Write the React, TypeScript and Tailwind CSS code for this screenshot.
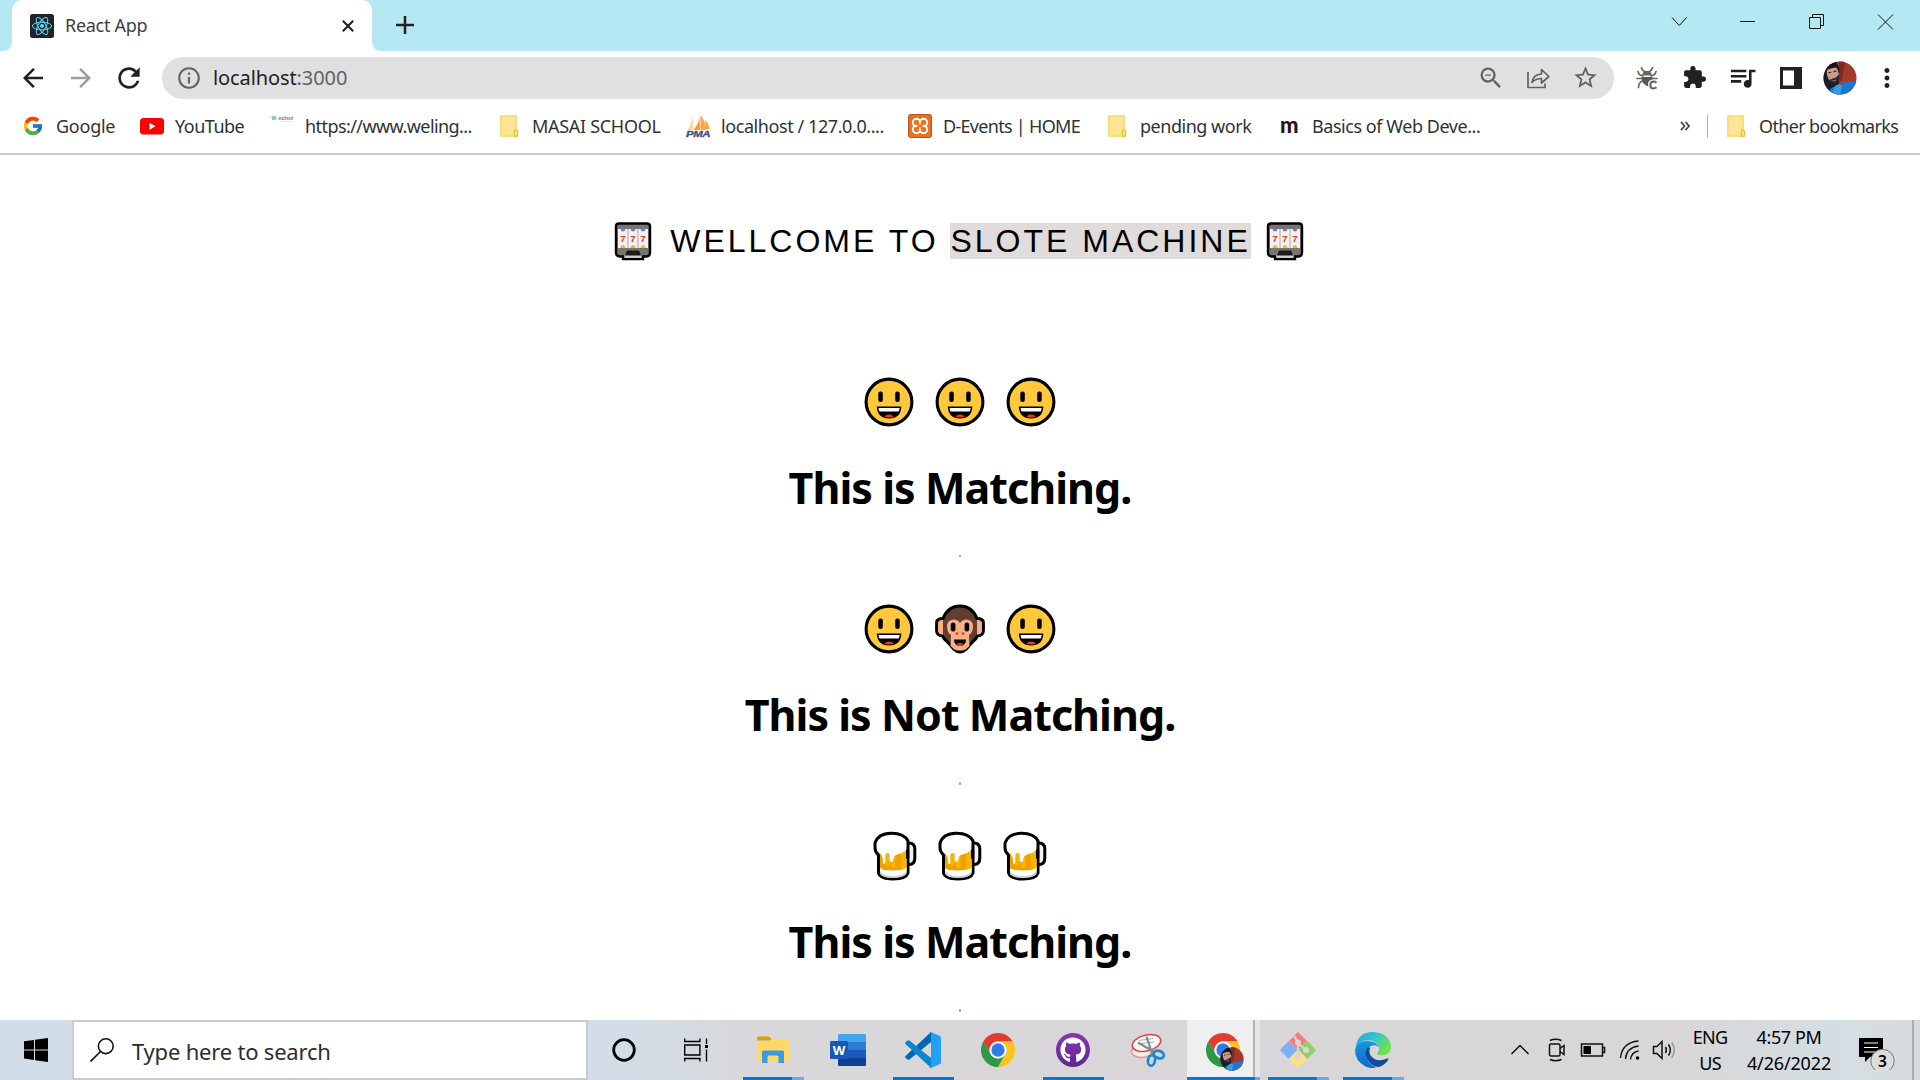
import React from 'react';
import { FcGoogle } from 'react-icons/fc';
import { FaGithub } from 'react-icons/fa';
import {
  MdArrowBack,
  MdArrowForward,
  MdExtension,
  MdInfoOutline,
  MdMoreVert,
  MdQueueMusic,
  MdRefresh,
  MdStarBorder,
  MdZoomOut,
} from 'react-icons/md';

/* ---------- browser chrome icons ---------- */

const ReactLogo = () => (
  <svg viewBox="0 0 24 24" className="size-6 shrink-0">
    <rect width="24" height="24" rx="2.5" fill="#20232a" />
    <g fill="none" stroke="#61dafb" strokeWidth="1">
      <ellipse cx="12" cy="12" rx="9.6" ry="3.8" />
      <ellipse cx="12" cy="12" rx="9.6" ry="3.8" transform="rotate(60 12 12)" />
      <ellipse cx="12" cy="12" rx="9.6" ry="3.8" transform="rotate(120 12 12)" />
    </g>
    <circle cx="12" cy="12" r="2" fill="#61dafb" />
  </svg>
);

const Folder = () => (
  <svg viewBox="0 0 24 24" className="size-6">
    <path d="M3.8 1.800h15.400v20.400H3.800z" fill="#ffe595" stroke="#f7d75e" strokeWidth="1.300" />
    <path d="M17.300 22.200v-4.800q0-1 1-1h1.300q1 0 1 1v4.800z" fill="#ffe595" stroke="#eabf2c" strokeWidth="1.200" />
  </svg>
);

const YouTube = () => (
  <svg viewBox="0 0 24 24" className="size-6">
    <rect y="4" width="24" height="16.5" rx="3.5" fill="#f00" />
    <path d="M9.5 8.7v7l6-3.5z" fill="#fff" />
  </svg>
);

const Welingkar = () => (
  <svg viewBox="0 0 24 24" className="size-6">
    <g fontFamily="Liberation Sans, sans-serif" fontWeight="700" fontSize="5">
      <text x="1.500" y="6" textLength="9" fill="#5fa85c">We</text>
      <text x="10.500" y="6" textLength="12" fill="#8d7fa5">school</text>
    </g>
    <path d="M10 7.500h12" stroke="#dcdce2" strokeWidth=".8" />
  </svg>
);

const PhpMyAdmin = () => (
  <svg viewBox="0 0 24 24" className="size-6">
    <path d="M6.500 2Q6 9 1.500 16h6z" fill="#fbd7a5" />
    <path d="M13.500.5Q14 8 7.500 16H14z" fill="#f89c2c" />
    <path d="M14.500 1q5 6 5.500 15h-5.500z" fill="#f9a842" />
    <path d="M19 6q4 4 4.500 9H20z" fill="#f5a549" />
    <text x="0" y="23.300" textLength="24" lengthAdjust="spacingAndGlyphs" fontFamily="Liberation Sans, sans-serif" fontWeight="700" fontStyle="italic" fontSize="9.800" fill="#4b4b78" stroke="#4b4b78" strokeWidth=".3">PMA</text>
  </svg>
);

const Xampp = () => (
  <svg viewBox="0 0 24 24" className="size-6">
    <rect x=".5" y=".5" width="23" height="23" rx="2" fill="#e8701e" stroke="#b9561a" />
    <g fill="none" stroke="#fff" strokeWidth="7.500">
      <circle cx="8.500" cy="8.500" r="1" />
      <circle cx="15.500" cy="8.500" r="1" />
      <circle cx="8.500" cy="15.500" r="1" />
      <circle cx="15.500" cy="15.500" r="1" />
    </g>
    <path d="M8 8q2.500-.5 2.500 2.200V12h3v-1.800Q13.500 7.500 16 8M8 16q2.500.5 2.500-2.200V12M16 16q-2.500.5-2.500-2.200V12" fill="none" stroke="#ea7524" strokeWidth="2.200" strokeLinecap="round" />
  </svg>
);

const MLogo = () => (
  <span className="flex size-6 items-center justify-center pb-0.5 font-['Lato',sans-serif] text-[22px] leading-none font-black text-[#2b1512]">m</span>
);

const Share = () => (
  <svg viewBox="0 0 24 24" className="size-6" fill="none" stroke="#5f6368" strokeWidth="1.700" strokeLinejoin="round">
    <path d="M2 6v15.500h17V17.500" />
    <path d="M6 16.500q1-8 9.500-8.500V3.500l7.300 7-7.300 6.500v-4.500q-6 0-9.500 4z" />
  </svg>
);

const Bug = () => (
  <svg viewBox="0 0 24 24" className="size-6">
    <g fill="none" stroke="#6e665e" strokeWidth="1.700" strokeLinecap="round">
      <path d="M6.500 1.500q1 3.500 3.500 4M17.500 1.500q-1 3.500-3.500 4M3 5.500q1 4 5 4.500M21 5.500q-1 4-5 4.500M2 12.500h5M17 12.500h5M3.500 21.500q0-5 4-6.500" />
    </g>
    <path d="M8 6.500q4-3.500 8 0l1.200 3H6.800z" fill="#6e665e" />
    <path d="M6.500 11h11v2.500q-4.500.500-4.500 4.500 0 1.500.5 2.500Q6.500 19 6.500 11z" fill="#5e564e" />
    <path d="M21.500 16.700q-1.200-1.200-3-1.200-3.200 0-3.200 3.500t3.200 3.500q1.800 0 3-1.200" fill="none" stroke="#6e665e" strokeWidth="2" />
  </svg>
);

const SidePanel = () => (
  <svg viewBox="0 0 22 22" className="size-[22px]">
    <path d="M0 0h22v22H0z" fill="#202124" />
    <path d="M3 3.500h11v15H3z" fill="#fff" />
  </svg>
);

const Avatar = ({ id, className }: { id: string; className: string }) => (
  <svg viewBox="0 0 34 34" className={className}>
    <clipPath id={id}>
      <circle cx="17" cy="17" r="16.500" />
    </clipPath>
    <g clipPath={'url(#' + id + ')'}>
      <rect width="34" height="34" fill="#a33a2c" />
      <path d="M0 0h13l3 8v26H0z" fill="#1a1c2c" />
      <path d="M16 0h6l-3 20h-4z" fill="#7c2a24" />
      <path d="M5 34q0-8 9-9l6-3q6-3 14-1v13z" fill="#1b78cb" />
      <path d="M16 23l3 2-2 9H9l3-9z" fill="#3b9be6" />
      <ellipse cx="10" cy="13" rx="6" ry="9" fill="#c99b8b" transform="rotate(-12 10 13)" />
      <path d="M3.500 9Q3 1.500 9 1.200q6-.2 7.500 7l-.5 5q-1-5.500-2.500-7-5 .5-10 2.800z" fill="#15131a" />
      <path d="M6.500 18.500q1.500 0 4-1.200 3-.3 5.500-4.300.5 8.500-3 9.800-5 .7-6.500-4.300z" fill="#33232a" />
      <path d="M9.500 19.700q2 .4 3.600-.9" stroke="#b87b70" fill="none" />
      <path d="M5.500 11.800l2.600-.5M10.500 10.700l3-.7" stroke="#231a20" strokeWidth="1.100" />
    </g>
  </svg>
);

const Bookmark = ({ icon, label, className }: { icon: React.ReactNode; label: string; className: string }) => (
  <div className={'flex shrink-0 items-center gap-[11px] whitespace-nowrap ' + className}>
    <span className="flex size-6 shrink-0 items-center justify-center">{icon}</span>
    <span>{label}</span>
  </div>
);

function TabStrip() {
  return (
    <div className="flex h-[51px] items-start bg-[#b4e8f2]">
      <div className="relative ml-3 flex h-[51px] w-[360px] items-center rounded-t-[10px] bg-white pl-[18px]">
        <svg viewBox="0 0 12 12" className="absolute bottom-0 -left-[10px] size-[10px]">
          <path d="M12 0v12H0Q12 12 12 0z" fill="#fff" />
        </svg>
        <svg viewBox="0 0 12 12" className="absolute -right-[10px] bottom-0 size-[10px]">
          <path d="M0 0v12h12Q0 12 0 0z" fill="#fff" />
        </svg>
        <ReactLogo />
        <span className="ml-[11px] w-[277px] text-[18px] tracking-[-0.3px] text-[#3c4043]">React App</span>
        <svg viewBox="0 0 12 12" className="size-3 shrink-0">
          <path d="M.8.8l10.400 10.400M11.200.8L.8 11.200" stroke="#202124" strokeWidth="2.100" />
        </svg>
      </div>
      <svg viewBox="0 0 18 18" className="mt-[16px] ml-6 size-[18px]">
        <path d="M9 0v18M0 9h18" stroke="#202124" strokeWidth="2.500" />
      </svg>
      <svg viewBox="0 0 280 51" className="ml-auto h-[51px] w-[280px]" fill="none" stroke="#111" strokeWidth="1">
        <path d="M32 17.500l7.300 8 7.300-8" />
        <path d="M100 21.500h15" />
        <path d="M169.500 17.500h11v11h-11zM172.500 17.500v-3h11v11h-3" />
        <path d="M238 14.500l15 15M253 14.500l-15 15" />
      </svg>
    </div>
  );
}

function Toolbar() {
  return (
    <div className="flex h-[53px] items-center text-[#202124]">
      <MdArrowBack className="ml-[18px] size-[30px]" />
      <MdArrowForward className="ml-[18px] size-[30px] text-[#9b9da0]" />
      <MdRefresh className="ml-[17px] size-8" />
      <div className="ml-[17px] flex h-[42px] w-[1452px] shrink-0 items-center rounded-full bg-[#e0e0e0] pl-[14px] text-[#5f6368]">
        <MdInfoOutline className="size-[26px] shrink-0" />
        <span className="mt-px ml-[11px] w-[1264px] shrink-0 text-[20px] tracking-[-0.1px]">
          <span className="text-[#202124]">localhost</span>:3000
        </span>
        <MdZoomOut className="size-7 shrink-0" />
        <span className="ml-[21px]"><Share /></span>
        <MdStarBorder className="ml-[22px] size-[27px] shrink-0" />
      </div>
      <span className="ml-[21px]"><Bug /></span>
      <MdExtension className="ml-[23px] size-[25px]" />
      <MdQueueMusic className="ml-5 size-[31px]" />
      <span className="ml-[22px]"><SidePanel /></span>
      <Avatar id="avatar-toolbar" className="ml-[21px] size-[34px]" />
      <MdMoreVert className="ml-[15px] size-[30px]" />
    </div>
  );
}

function BookmarksBar() {
  return (
    <div className="flex h-[51px] items-center border-b-2 border-[#cacaca] pb-[5px] pl-[21px] text-[18px] text-[#2f3235]">
      <Bookmark icon={<FcGoogle className="size-[22px]" />} label="Google" className="w-[119px] tracking-[-0.25px]" />
      <Bookmark icon={<YouTube />} label="YouTube" className="w-[130px] tracking-[-0.5px]" />
      <Bookmark icon={<Welingkar />} label="https://www.weling..." className="w-[227px] tracking-[-0.57px]" />
      <Bookmark icon={<Folder />} label="MASAI SCHOOL" className="w-[189px] tracking-[-0.3px]" />
      <Bookmark icon={<PhpMyAdmin />} label="localhost / 127.0.0...." className="w-[222px] tracking-[-0.42px]" />
      <Bookmark icon={<Xampp />} label="D-Events | HOME" className="w-[197px] tracking-[-0.7px]" />
      <Bookmark icon={<Folder />} label="pending work" className="w-[172px] tracking-[-0.48px]" />
      <Bookmark icon={<MLogo />} label="Basics of Web Deve..." className="w-[403px] tracking-[-0.45px]" />
      <svg viewBox="0 0 10 10" className="size-[10px]" fill="none" stroke="#4a4d51" strokeWidth="1.800">
        <path d="M1 .8L4.500 5 1 9.200M5.500.8L9 5 5.500 9.200" />
      </svg>
      <div className="ml-[17px] h-6 w-px bg-[#b5b5b5]" />
      <Bookmark icon={<Folder />} label="Other bookmarks" className="ml-4 tracking-[-0.65px]" />
    </div>
  );
}

/* ---------- page emoji ---------- */

const Slot = () => (
  <svg viewBox="0 0 44 44" className="size-11">
    <path d="M8 5.500h28q3 0 3 3v26q0 4-4 4h-3V41H12v-2.500H9q-4 0-4-4v-26q0-3 3-3z" fill="#767676" stroke="#000" strokeWidth="2.400" />
    <path d="M13.500 37h17v3h-17z" fill="#ccc" />
    <path d="M16 32.500h12l2 5H14z" fill="#1c1c1c" />
    <rect x="7" y="11" width="30" height="19" fill="#f2f2f2" />
    <path d="M17 11v19M27 11v19" stroke="#aaa" strokeWidth="1" />
    <path d="M9.500 11h5q-.5 2.500-2.500 2.500T9.500 11zM19.500 11h5q-.5 2.500-2.500 2.500t-2.500-2.500zM29.500 11h5q-.5 2.500-2.500 2.500t-2.500-2.500z" fill="#886ce4" />
    <path d="M9.500 30h5q-.5-3-2.500-3t-2.500 3zM19.500 30h5q-.5-3-2.500-3t-2.500 3zM29.500 30h5q-.5-3-2.500-3t-2.500 3z" fill="#ffb900" />
    <g fontFamily="Liberation Sans, sans-serif" fontWeight="700" fontSize="9.500" fill="#e8321c" textAnchor="middle">
      <text x="12" y="23.500">7</text>
      <text x="22" y="23.500">7</text>
      <text x="32" y="23.500">7</text>
    </g>
  </svg>
);

const Smile = () => (
  <svg viewBox="0 0 50 50" className="size-[50px]">
    <circle cx="25" cy="25" r="22.900" fill="#ffc83d" stroke="#000" strokeWidth="3.100" />
    <rect x="14.300" y="14.500" width="4.500" height="10.500" rx="2" />
    <rect x="31.200" y="14.500" width="4.500" height="10.500" rx="2" />
    <path d="M12.800 29.500h24.600q-.6 12-12.300 12t-12.300-12z" />
    <path d="M14.600 30.900h21q-.2 3.700-1.700 3.700H16.300q-1.500 0-1.700-3.700z" fill="#fff" />
    <path d="M20.500 39.500q1.500-1.900 4.600-1.900t4.600 1.900q-1.800 1.100-4.600 1.100t-4.600-1.100z" fill="#f03a17" />
  </svg>
);

const Monkey = () => (
  <svg viewBox="0 0 50 50" className="size-[50px]">
    <path d="M25 2q12 0 17 12.500 6.400 0 6.400 4v8q0 5-6 5.500-1 3-5 6l-6.500 7.500q-2.500 2.500-5.900 2.500t-5.900-2.500L12.600 38q-4-3-5-6-6-.5-6-5.500v-8q0-4 6.400-4Q13 2 25 2z" fill="#603e30" stroke="#000" strokeWidth="3" strokeLinejoin="round" />
    <path d="M8 16v14.500q-5 0-5-4v-7q0-3.500 5-3.500zM42 16v14.500q5 0 5-4v-7q0-3.500-5-3.500z" fill="#f7af87" />
    <path d="M25 19q2-3.500 6.500-3.500 6.500.5 6.500 7 0 6-4 8.500l.5 11-4 3.500q-2 1-5.500 1T19.500 45.500l-4-3.500.5-11q-4-2.500-4-8.500 0-6.500 6.500-7Q23 15.500 25 19z" fill="#f7af87" />
    <rect x="15.800" y="18.500" width="4.600" height="9" rx="2.200" />
    <rect x="29.600" y="18.500" width="4.600" height="9" rx="2.200" />
    <circle cx="22" cy="29.500" r="1.500" fill="#d6521c" />
    <circle cx="28" cy="29.500" r="1.500" fill="#d6521c" />
    <path d="M19 35.500h12q0 6.500-6 6.500t-6-6.500z" />
    <path d="M21.500 40.300q3.500-2.500 7 0Q27 42 25 42t-3.500-1.700z" fill="#f03a17" />
  </svg>
);

const Beer = () => (
  <svg viewBox="0 0 44 50" className="h-[50px] w-11">
    <path d="M33.500 12h2.500q5.800 0 5.800 6v9q0 6.500-5.800 6.500h-2.500" fill="#f2f2f2" stroke="#000" strokeWidth="3" />
    <path d="M5.500 24Q2 21 2 17v-5Q5 2.500 18 2.200 31 2 35 10v32q-2 6-15 6T5.500 42z" fill="#fff" stroke="#000" strokeWidth="3" strokeLinejoin="round" />
    <path d="M7 37v6q3 4 13 4t13.500-4v-6z" fill="#d2d2d2" />
    <path d="M7 37v3q3 5 13 5t13.500-5v-4z" fill="#fff" />
    <path d="M7 22q3 3 3 9 0 2 1.200 2t1.300-2v-7q.5-2 2-2t2 2v5q.5 2 2 2 2 0 2-3 .5-4 5-5 5-1 8-4v17q-3 3.500-13.500 3.500T7 37z" fill="#eda200" />
    <path d="M12.500 24q.5-2 2-2t2 2v9q-.5 2-2 2t-2-2zM18 31.500q2.300 0 2.500-3 .5-3 2-4V35q-.5 2-2.200 2T18 35zM28 22.500q3.500-1 5.500-3.500V37l-5.500 2z" fill="#ffb900" opacity=".8" />
    <rect x="33" y="18" width="3.200" height="10" rx="1.500" />
  </svg>
);

function SlotResult({ reels, text, mark, gap }: { reels: React.ReactNode[]; text: string; mark: string; gap: string }) {
  return (
    <section className="flex h-[227px] flex-col items-center">
      <div className={'flex ' + gap}>
        {reels.map((reel, i) => (
          <React.Fragment key={i}>{reel}</React.Fragment>
        ))}
      </div>
      <h1 className="mt-[31px] text-[43px] leading-[60px] font-bold tracking-[-0.96px] whitespace-nowrap text-black">{text}</h1>
      <div className={mark} />
    </section>
  );
}

function Page() {
  return (
    <main className="flex h-[865px] flex-col items-center overflow-hidden bg-white pt-[62px]">
      <div className="flex h-12 items-center text-black">
        <span className="mr-[15px] pb-[2px] pl-px"><Slot /></span>
        <p className="font-['Liberation_Sans',Arial,sans-serif] text-[32px] leading-[48px] tracking-[3px] whitespace-nowrap">
          WELLCOME TO <span className="bg-[#e0dcdc]">SLOTE MACHINE</span>
        </p>
        <span className="mr-[3px] ml-3 pb-[2px]"><Slot /></span>
      </div>
      <div className="mt-[111.500px]">
        <SlotResult reels={[<Smile />, <Smile />, <Smile />]} text="This is Matching." mark="mt-[37px] size-[2px] bg-[#aaa]" gap="gap-[21.3px]" />
        <SlotResult reels={[<Smile />, <Monkey />, <Smile />]} text="This is Not Matching." mark="mt-[37px] h-[3px] w-[2px] bg-[#aaa]" gap="gap-[21.3px]" />
        <SlotResult reels={[<Beer />, <Beer />, <Beer />]} text="This is Matching." mark="mt-[37px] h-[3px] w-[2px] bg-[#aaa]" gap="gap-[21.3px]" />
      </div>
    </main>
  );
}

/* ---------- taskbar ---------- */

const ChromeLogo = ({ className }: { className: string }) => (
  <svg viewBox="2 2 44 44" className={className}>
    <path d="M24 13H43.050A22 22 0 0 0 4.950 13L14.470 29.500A11 11 0 0 1 24 13z" fill="#e33b2e" />
    <path d="M33.530 29.500L24 46A22 22 0 0 0 43.050 13H24A11 11 0 0 1 33.530 29.500z" fill="#fcc31e" />
    <path d="M14.470 29.500L4.950 13A22 22 0 0 0 24 46L33.530 29.500A11 11 0 0 1 14.470 29.500z" fill="#2a9a48" />
    <circle cx="24" cy="24" r="11" fill="#fff" />
    <circle cx="24" cy="24" r="8.600" fill="#2f7bea" />
  </svg>
);

const Explorer = () => (
  <svg viewBox="0 0 32 28" className="h-7 w-8">
    <path d="M0 2q0-1.500 1.500-1.500h10q1 0 2 1.500l1.500 2.500H0z" fill="#e0a000" />
    <path d="M0 5h12l3-2h15.500Q32 3 32 4.500v20q0 1.500-1.500 1.500h-29Q0 26 0 24.500z" fill="#ffd867" />
    <path d="M5 27V16q0-1.500 1.500-1.500h19Q27 14.500 27 16v11h-5.500v-6q0-1.500-1.500-1.500h-8q-1.500 0-1.500 1.500v6z" fill="#3a9be0" />
  </svg>
);

const Word = () => (
  <svg viewBox="0 0 36 33" className="h-[33px] w-9">
    <path d="M8 1.500Q8 0 9.500 0h25Q36 0 36 1.500V8H8z" fill="#41a5ee" />
    <path d="M8 8h28v8H8z" fill="#2b7cd3" />
    <path d="M8 16h28v8H8z" fill="#185abd" />
    <path d="M8 24h28v6.500q0 1.500-1.500 1.500h-25Q8 32 8 30.500z" fill="#103f91" />
    <rect y="7" width="18" height="18" rx="1.500" fill="#1857b8" />
    <text x="9" y="20.500" textAnchor="middle" fontFamily="Open Sans, sans-serif" fontSize="13" fontWeight="700" fill="#fff">W</text>
  </svg>
);

const VsCode = () => (
  <svg viewBox="0 0 36 36" className="size-9">
    <path d="M26 0v10L4.500 27.500q-1 .7-2 0L.5 25.800q-.8-.9 0-1.800z" fill="#0069ad" />
    <path d="M26 36V26L4.500 8.500q-1-.7-2 0L.5 10.200q-.8.900 0 1.800z" fill="#0b84d4" />
    <path d="M26 0l9 4q1 .5 1 1.600v24.800q0 1.100-1 1.600l-9 4q-1 .3-1.800-.3 1.800 0 1.800-1.700V2Q26 .3 24.200.3 25-.2 26 0z" fill="#22a0f1" />
  </svg>
);

const GitHub = () => (
  <span className="flex size-[34px] items-center justify-center rounded-full bg-[linear-gradient(180deg,#8a35b8,#5c2a88)]">
    <FaGithub className="size-[26px] text-white" />
  </span>
);

const Snip = () => (
  <svg viewBox="0 0 36 36" className="size-9">
    <ellipse cx="11.500" cy="19.500" rx="10" ry="6" fill="#eee" stroke="#e89a9a" strokeWidth="1.500" />
    <ellipse cx="16.500" cy="11" rx="14.500" ry="8" fill="#fafafa" stroke="#e04545" strokeWidth="1.600" transform="rotate(-14 16.500 11)" />
    <path d="M9 8.500l14-2M8 12l16-2" stroke="#aaa" strokeWidth="1" />
    <path d="M16.500 4.500l5.500 17M8 10.500l17 10" stroke="#858b90" strokeWidth="2.200" />
    <ellipse cx="28.800" cy="22.500" rx="5.200" ry="3.600" fill="none" stroke="#1e88cc" strokeWidth="2.700" transform="rotate(20 28.800 22.500)" />
    <ellipse cx="21.500" cy="28.500" rx="3.500" ry="5.300" fill="none" stroke="#1e88cc" strokeWidth="2.700" transform="rotate(10 21.500 28.500)" />
  </svg>
);

const GitLogo = () => (
  <svg viewBox="0 0 36 36" className="size-9">
    <path d="M18 .5L26.500 9 18 17.500 9.500 9z" fill="#f47c7c" stroke="#f47c7c" strokeLinejoin="round" />
    <path d="M27.500 9.500l8 8.500-8 8.500L19 18z" fill="#8fd06a" stroke="#8fd06a" strokeLinejoin="round" />
    <path d="M8.500 9.500L17 18l-8.500 8.500L.5 18z" fill="#7fb0fb" stroke="#7fb0fb" strokeLinejoin="round" />
    <path d="M18 18.500l8.500 8.500-8.500 8.500L9.500 27z" fill="#fbe27a" stroke="#fbe27a" strokeLinejoin="round" />
    <path d="M14 4l4 6v15M18 11l8 7" stroke="#d8d6d7" strokeWidth="2.200" fill="none" />
    <g fill="#d8d6d7">
      <circle cx="18" cy="10.500" r="3" />
      <circle cx="18" cy="25" r="3" />
      <circle cx="26" cy="18" r="3" />
    </g>
  </svg>
);

const Edge = () => (
  <svg viewBox="0 0 36 36" className="size-9">
    <defs>
      <linearGradient id="edge-top" x1="0" y1="0" x2="1" y2=".5">
        <stop offset="0" stopColor="#1fa5e0" />
        <stop offset=".5" stopColor="#30c3d2" />
        <stop offset="1" stopColor="#6fe34b" />
      </linearGradient>
      <linearGradient id="edge-left" x1="0" y1="0" x2="0" y2="1">
        <stop offset="0" stopColor="#1798dd" />
        <stop offset="1" stopColor="#0b69cf" />
      </linearGradient>
    </defs>
    <path d="M.5 15Q3 0 18 0q17 1 18 15-.5 8-9 8.500-5 0-5-2.500 3-2.500 1.500-7Q20 7 10 8.500 4 10 .5 15z" fill="url(#edge-top)" />
    <path d="M0 18Q1 10 11 9q10-.5 12.500 6-2-2-5-1.800Q12 14 11.500 22q0 10 9.500 13.500Q16 37 10.500 34.500 0 29 0 18z" fill="url(#edge-left)" />
    <path d="M12.500 15.500Q9 20 12 27q5 8.500 12 8 7-2.500 9.500-8 .2-1-1-.6-11 4.600-16.500-2.400-3-4-.5-8.500z" fill="#114d97" />
  </svg>
);

const AppButton = ({ children, bar = '', shade = '' }: { children: React.ReactNode; bar?: string; shade?: string }) => (
  <div className="flex h-[60px] w-[75px] shrink-0 flex-col items-center">
    <div className="flex h-[57px] items-center pt-[3px] pr-[2px]">{children}</div>
    <div className="flex h-[3px] w-[61px]">
      <span className={'h-full flex-1 ' + bar} />
      <span className={'h-full w-3 ' + shade} />
    </div>
  </div>
);

function Tray() {
  return (
    <>
      <svg viewBox="0 0 172 30" className="ml-[97px] h-[30px] w-[172px] shrink-0" fill="none" stroke="#111" strokeWidth="1.500">
        <path d="M3.500 19l8.500-8.500 8.500 8.500" />
        <path d="M42 5.500q5.500-2.300 11.500 0M42 24.500q5.500 2.300 11.500 0" />
        <rect x="41.500" y="9" width="10.500" height="12" rx="1.500" />
        <path d="M52 13.500l4-3v9l-4-3" />
        <path d="M73.500 9h21v12h-21z" />
        <path d="M95 12.500h1.500v5H95" />
        <path d="M75.500 11h7.500v8h-7.500z" fill="#000" stroke="none" />
        <path d="M112.500 23Q114 7.500 130.500 6M117.500 24Q118.500 12.500 130.500 11M122.500 24.500q1-7.500 8-8.500" strokeWidth="1.400" />
        <circle cx="129.500" cy="23" r="1.800" fill="#000" stroke="none" />
        <path d="M145.500 11.500h3.500l5-5v17l-5-5h-3.500z" />
        <path d="M157.500 12q1.800 3 0 6M160.500 9.500q3.600 5.500 0 11" />
        <path d="M163.800 7.500q5 7.500 0 15" stroke="#999" />
      </svg>
      <div className="ml-[5px] w-[50px] text-center text-[18px] leading-[26.500px] tracking-[-0.7px] text-black">
        <div>ENG</div>
        <div>US</div>
      </div>
      <div className="ml-1 w-[100px] text-center text-[18px] leading-[26.500px] text-black">
        <div className="tracking-[-0.4px]">4:57 PM</div>
        <div className="tracking-[-0.15px]">4/26/2022</div>
      </div>
      <svg viewBox="0 0 44 40" className="ml-[15px] h-10 w-11 shrink-0">
        <path d="M5 8h24v19H16l-5 5v-5H5z" />
        <path d="M10 13h14M10 17.500h14M10 22h14" stroke="#fff" strokeWidth="1.200" />
        <circle cx="28.500" cy="31" r="11.700" fill="#dadcde" stroke="#777" strokeWidth="1" />
        <text x="28.500" y="36.500" textAnchor="middle" fontFamily="Noto Sans, sans-serif" fontSize="15.500" fontWeight="600">3</text>
      </svg>
      <div className="mr-[6px] ml-auto h-[60px] w-[2px] shrink-0 bg-[#adadad]" />
    </>
  );
}

function Taskbar() {
  return (
    <footer className="flex h-[60px] items-center bg-[linear-gradient(90deg,#d1dde7_0px,#d2dde8_620px,#d8d7d9_760px,#d8d6d7_1680px,#d4dfe3_1850px,#d8d9db_1920px)]">
      <div className="flex w-[72px] shrink-0 justify-center">
        <svg viewBox="0 0 24 24" className="size-6">
          <path d="M0 3.300l10-1.400v9.500H0zM11 1.800L24 0v11.400H11zM0 12.500h10v9.500L0 20.600zM11 12.500h13V24l-13-1.800z" />
        </svg>
      </div>
      <div className="flex h-[60px] w-[516px] shrink-0 items-center border-2 border-[#cbcbcb] bg-white pl-4">
        <svg viewBox="0 0 24 24" className="size-6 shrink-0" fill="none" stroke="#111" strokeWidth="1.600">
          <circle cx="15.800" cy="8.200" r="7.400" />
          <path d="M10.500 13.500L.5 23.500" />
        </svg>
        <span className="mt-0.5 ml-[18px] text-[22px] tracking-[-0.2px] text-[#2d2d2d]">Type here to search</span>
      </div>
      <div className="flex w-[72px] shrink-0 justify-center">
        <svg viewBox="0 0 26 26" className="size-[26px]">
          <circle cx="13" cy="13" r="10.300" fill="none" stroke="#000" strokeWidth="2.800" />
        </svg>
      </div>
      <div className="flex w-[76px] shrink-0 justify-center pr-1">
        <svg viewBox="0 0 24 24" className="size-6" fill="none" stroke="#000" strokeWidth="1.400">
          <path d="M.7 7h15.200v10H.7zM.7.500v3h15.200v-3M.7 23.500v-3h15.200v3M22.500.500V6M22.500 11.500v12" />
          <path d="M21 7h3v3h-3z" fill="#000" stroke="none" />
        </svg>
      </div>
      <AppButton bar="bg-[#0078d7]" shade="bg-[#67ade4]"><Explorer /></AppButton>
      <AppButton><Word /></AppButton>
      <AppButton bar="bg-[#0078d7]" shade="bg-[#0078d7]"><VsCode /></AppButton>
      <AppButton><ChromeLogo className="size-[34px]" /></AppButton>
      <AppButton bar="bg-[#0078d7]" shade="bg-[#0078d7]"><GitHub /></AppButton>
      <AppButton><Snip /></AppButton>
      <div className="ml-px flex h-[60px] w-[74px] shrink-0">
        <div className="flex w-[66px] flex-col bg-[#efeff0]">
          <div className="relative flex h-[57px] items-center pt-[3px] pl-[19px]">
            <ChromeLogo className="size-[34px]" />
            <Avatar id="avatar-taskbar" className="absolute top-[27px] left-[33px] size-6" />
          </div>
          <div className="h-[3px] bg-[#0078d7]" />
        </div>
        <div className="flex w-[2px] flex-col bg-[#b4b4b5]">
          <div className="mt-auto h-[3px] bg-[#0078d7]" />
        </div>
        <div className="flex w-[5px] flex-col bg-[#e6e6e7]">
          <div className="mt-auto h-[3px] bg-[#67ade4]" />
        </div>
      </div>
      <AppButton bar="bg-[#0078d7]" shade="bg-[#67ade4]"><GitLogo /></AppButton>
      <AppButton bar="bg-[#0078d7]" shade="bg-[#67ade4]"><Edge /></AppButton>
      <Tray />
    </footer>
  );
}

export default function App() {
  return (
    <div className="flex h-[1080px] w-[1920px] flex-col overflow-hidden bg-white font-['Noto_Sans','Open_Sans',sans-serif]">
      <TabStrip />
      <Toolbar />
      <BookmarksBar />
      <Page />
      <Taskbar />
    </div>
  );
}
